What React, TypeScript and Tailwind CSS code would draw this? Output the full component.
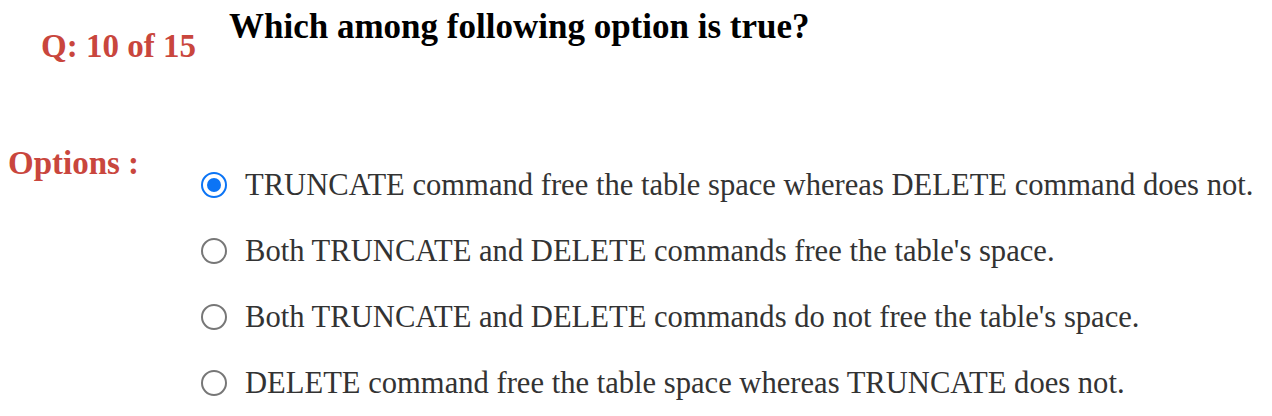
import React from "react";

const options = [
  "TRUNCATE command free the table space whereas DELETE command does not.",
  "Both TRUNCATE and DELETE commands free the table's space.",
  "Both TRUNCATE and DELETE commands do not free the table's space.",
  "DELETE command free the table space whereas TRUNCATE does not.",
];

function Radio({ checked }: { checked: boolean }) {
  return checked ? (
    <span className="flex h-[26px] w-[26px] shrink-0 items-center justify-center rounded-full border-[2.5px] border-[#0b74f5] bg-white">
      <span className="h-[14px] w-[14px] rounded-full bg-[#0b74f5]" />
    </span>
  ) : (
    <span className="h-[26px] w-[26px] shrink-0 rounded-full border-[2.5px] border-[#777] bg-white" />
  );
}

export default function App() {
  return (
    <main className="min-h-screen bg-white font-['Liberation_Serif',serif] text-[#333]">
      {/* Question header */}
      <div className="flex items-start">
        <div className="w-[229px] shrink-0 pl-[41px] pt-[30px]">
          <span className="block text-[33px] font-bold leading-none text-[#c9463d]">Q: 10 of 15</span>
        </div>
        <h1 className="pt-[9px] text-[35px] font-bold leading-none text-black">
          Which among following option is true?
        </h1>
      </div>

      {/* Options */}
      <div className="mt-[84px] flex items-start">
        <div className="w-[201px] shrink-0 pl-[8px]">
          <span className="block text-[33px] font-bold leading-none text-[#c9463d]">Options :</span>
        </div>
        <div className="flex flex-col gap-[35.4px] pt-[22.7px]">
          {options.map((o, i) => (
            <label key={i} className="flex items-center gap-[18px] text-[30.6px] leading-none">
              <Radio checked={i === 0} />
              <span>{o}</span>
            </label>
          ))}
        </div>
      </div>
    </main>
  );
}
